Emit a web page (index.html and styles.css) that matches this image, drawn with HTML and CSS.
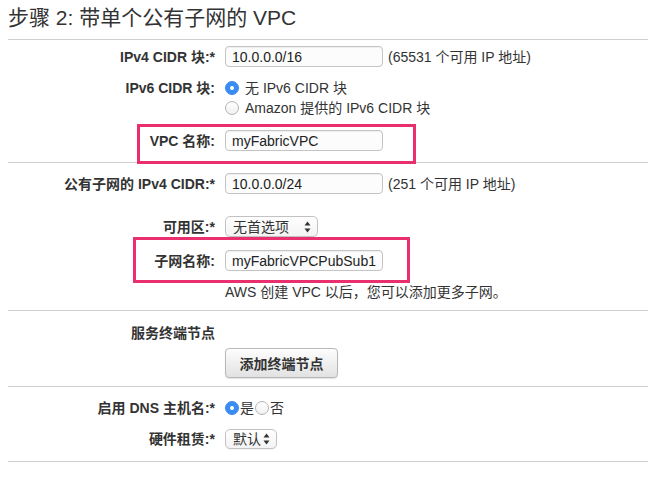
FILE: index.html
```html
<!DOCTYPE html>
<html lang="zh-CN">
<head>
  <meta charset="UTF-8">
  <meta name="viewport" content="width=device-width, initial-scale=1.0">
  <title>步骤 2: 带单个公有子网的 VPC</title>
  <link rel="stylesheet" href="styles.css">
</head>
<body>
  <div class="wizard">
    <h2 class="wizard-title">步骤 2: 带单个公有子网的 VPC</h2>

    <!-- VPC 设置 -->
    <div class="section section-vpc">
      <div class="row">
        <label class="row-label" for="vpcCidr">IPv4 CIDR 块:*</label>
        <div class="row-field">
          <input class="text-input" id="vpcCidr" type="text" value="10.0.0.0/16">
          <span class="hint">(65531 个可用 IP 地址)</span>
        </div>
      </div>

      <div class="row row-radios">
        <span class="row-label">IPv6 CIDR 块:</span>
        <div class="row-field radio-list">
          <div class="radio-item"><span class="radio checked"></span>无 IPv6 CIDR 块</div>
          <div class="radio-item"><span class="radio"></span>Amazon 提供的 IPv6 CIDR 块</div>
        </div>
      </div>

      <div class="row row-vpc-name marked mark-vpc">
        <label class="row-label" for="vpcName">VPC 名称:</label>
        <div class="row-field">
          <input class="text-input" id="vpcName" type="text" value="myFabricVPC">
        </div>
      </div>
    </div>

    <!-- 子网设置 -->
    <div class="section section-subnet">
      <div class="row">
        <label class="row-label" for="subnetCidr">公有子网的 IPv4 CIDR:*</label>
        <div class="row-field">
          <input class="text-input" id="subnetCidr" type="text" value="10.0.0.0/24">
          <span class="hint">(251 个可用 IP 地址)</span>
        </div>
      </div>

      <div class="row row-zone">
        <span class="row-label">可用区:*</span>
        <div class="row-field">
          <div class="select select-zone">
            <span>无首选项</span>
            <svg class="select-arrows" width="7" height="12" viewBox="0 0 7 12"><path d="M3.5 0.5 L6.5 4.5 H0.5 Z M3.5 11.5 L6.5 7.5 H0.5 Z" fill="#333"/></svg>
          </div>
        </div>
      </div>

      <div class="row row-subnet-name marked mark-subnet">
        <label class="row-label" for="subnetName">子网名称:</label>
        <div class="row-field">
          <input class="text-input" id="subnetName" type="text" value="myFabricVPCPubSub1">
        </div>
      </div>

      <div class="row row-help">
        <span class="row-label"></span>
        <div class="row-field help-text">AWS 创建 VPC 以后，您可以添加更多子网。</div>
      </div>
    </div>

    <!-- 终端节点 -->
    <div class="section section-endpoints">
      <div class="row row-endpoint-label">
        <span class="row-label">服务终端节点</span>
        <div class="row-field"></div>
      </div>
      <div class="row row-endpoint-btn">
        <span class="row-label"></span>
        <div class="row-field">
          <button class="btn" type="button">添加终端节点</button>
        </div>
      </div>
    </div>

    <!-- 其他选项 -->
    <div class="section section-misc">
      <div class="row row-dns">
        <span class="row-label">启用 DNS 主机名:*</span>
        <div class="row-field inline-radios">
          <span class="radio checked"></span><span>是</span>
          <span class="radio"></span><span>否</span>
        </div>
      </div>
      <div class="row row-tenancy">
        <span class="row-label">硬件租赁:*</span>
        <div class="row-field">
          <div class="select select-tenancy">
            <span>默认</span>
            <svg class="select-arrows" width="7" height="12" viewBox="0 0 7 12"><path d="M3.5 0.5 L6.5 4.5 H0.5 Z M3.5 11.5 L6.5 7.5 H0.5 Z" fill="#333"/></svg>
          </div>
        </div>
      </div>
    </div>
  </div>
</body>
</html>
```

FILE: styles.css
```css
:root {
  --text-color: #333;
  --label-color: #333;
  --line-color: #cfcfcf;
  --input-border: #c4c4c4;
  --radio-blue: #3a8cf0;
  --mark-color: #ea2f6e;
  --label-width: 207px;
}

* {
  box-sizing: border-box;
  margin: 0;
  padding: 0;
}

body {
  font-family: "Liberation Sans", "Noto Sans CJK SC", sans-serif;
  font-size: 14px;
  color: var(--text-color);
  background: #fff;
}

.wizard {
  padding-left: 8px;
}

.wizard-title {
  font-size: 21px;
  font-weight: normal;
  line-height: 24px;
  padding-top: 6px;
  margin-bottom: 9px;
  color: #333;
}

.section {
  border-top: 1px solid var(--line-color);
}

.section-misc {
  border-bottom: 1px solid var(--line-color);
}

.row {
  display: grid;
  grid-template-columns: var(--label-width) 1fr;
  column-gap: 10px;
  align-items: center;
  line-height: 20px;
}

.row-label {
  text-align: right;
  font-weight: bold;
  color: var(--label-color);
}

.row-field {
  display: flex;
  align-items: center;
  gap: 5px;
}

.text-input {
  width: 158px;
  height: 21px;
  padding: 0 6px;
  border: 1px solid var(--input-border);
  border-radius: 4px;
  background: #fcfcfc;
  box-shadow: inset 0 1px 1px rgba(0,0,0,0.06);
  font-family: inherit;
  font-size: 14px;
  color: #222;
}

.hint {
  white-space: nowrap;
}

/* radios */
.radio {
  display: inline-block;
  width: 14px;
  height: 14px;
  border-radius: 50%;
  border: 1px solid #b3b3b3;
  background: linear-gradient(#fff, #f1f1f1);
  flex-shrink: 0;
  position: relative;
}

.radio.checked {
  border-color: var(--radio-blue);
  background: var(--radio-blue);
}

.radio.checked::after {
  content: "";
  position: absolute;
  left: 4px;
  top: 4px;
  width: 4px;
  height: 4px;
  border-radius: 50%;
  background: #fff;
}

.radio-list {
  flex-direction: column;
  align-items: flex-start;
  gap: 0;
}

.radio-item {
  display: flex;
  align-items: center;
  gap: 6px;
  line-height: 20px;
}

.row-radios {
  align-items: start;
  margin-top: 11px;
}

.inline-radios {
  gap: 1px;
}

/* selects */
.select {
  display: flex;
  align-items: center;
  justify-content: space-between;
  height: 21px;
  padding: 0 6px 0 7px;
  border: 1px solid #c2c2c2;
  border-radius: 5px;
  background: linear-gradient(#ffffff, #f3f3f3);
  box-shadow: 0 1px 1px rgba(0,0,0,0.05);
}

.select-zone {
  width: 93px;
}

.select-tenancy {
  width: 52px;
  height: 20px;
}

.select-arrows {
  flex-shrink: 0;
}

/* button */
.btn {
  width: 113px;
  height: 30px;
  border: 1px solid #b8b8b8;
  border-radius: 4px;
  background: linear-gradient(#fdfdfd, #e2e2e2);
  box-shadow: 0 1px 1px rgba(0,0,0,0.12);
  font-family: inherit;
  font-size: 14px;
  font-weight: bold;
  color: #333;
}

/* annotation boxes */
.marked {
  position: relative;
}

.marked::after {
  content: "";
  position: absolute;
  border: 3px solid var(--mark-color);
  pointer-events: none;
}

.mark-vpc::after {
  left: 129px;
  width: 273px;
  top: -6px;
  height: 34px;
}

.mark-subnet::after {
  left: 125px;
  width: 271px;
  top: -13px;
  height: 40px;
}

/* vertical rhythm */
.section-vpc { padding-top: 6px; padding-bottom: 11px; }
.row-vpc-name { margin-top: 12px; }

.section-subnet { padding-top: 10px; padding-bottom: 9px; }
.row-zone { margin-top: 22px; }
.row-subnet-name { margin-top: 13px; }
.row-help { margin-top: 12px; line-height: 18px; }

.section-endpoints { padding-top: 13px; padding-bottom: 8px; }
.row-endpoint-label { line-height: 18px; }
.row-endpoint-btn { margin-top: 6px; }

.section-misc { padding-top: 11px; padding-bottom: 12px; }
.row-tenancy { margin-top: 11px; }
```
